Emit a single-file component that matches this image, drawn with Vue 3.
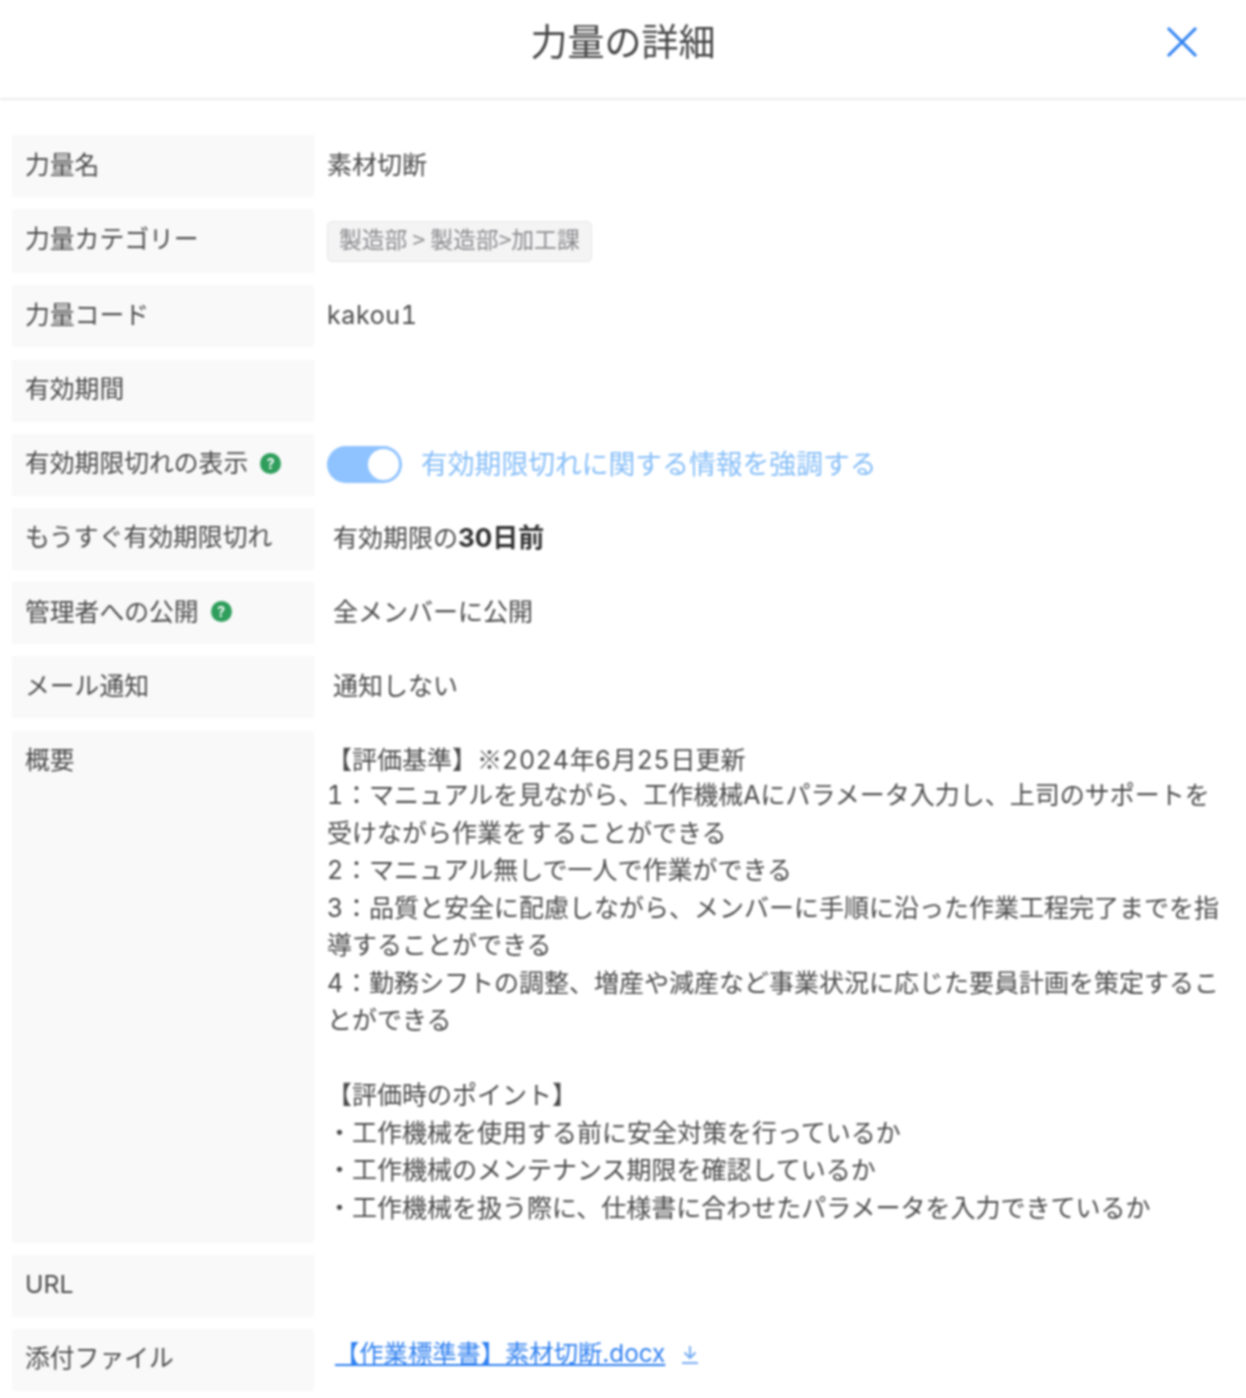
<script setup>
const lines = [
  '【評価基準】※2024年6月25日更新',
  '1：マニュアルを見ながら、工作機械Aにパラメータ入力し、上司のサポートを',
  '受けながら作業をすることができる',
  '2：マニュアル無しで一人で作業ができる',
  '3：品質と安全に配慮しながら、メンバーに手順に沿った作業工程完了までを指',
  '導することができる',
  '4：勤務シフトの調整、増産や減産など事業状況に応じた要員計画を策定するこ',
  'とができる',
  '',
  '【評価時のポイント】',
  '・工作機械を使用する前に安全対策を行っているか',
  '・工作機械のメンテナンス期限を確認しているか',
  '・工作機械を扱う際に、仕様書に合わせたパラメータを入力できているか'
]

// Digits are set wider than the surrounding text; the reference mark stays full width.
const rows = lines.map((line) =>
  line.split(/([0-9]+|※)/).filter(Boolean).map((text) => ({
    text,
    kind: /^[0-9]+$/.test(text) ? 'num' : text === '※' ? 'mark' : ''
  }))
)
</script>

<template>
  <div class="page">
    <header class="head">
      <h1 class="title">力量の詳細</h1>
      <button class="close" aria-label="閉じる">
        <svg viewBox="0 0 32 32" width="32" height="32"><path d="M2 2 L30 30 M30 2 L2 30" /></svg>
      </button>
    </header>
    <div class="table">
      <div class="label">力量名</div>
      <div class="value">素材切断</div>

      <div class="label tall">力量カテゴリー</div>
      <div class="value"><span class="tag">製造部 &gt; 製造部&gt;加工課</span></div>

      <div class="label">力量コード</div>
      <div class="value code">kakou1</div>

      <div class="label">有効期間</div>
      <div class="value"></div>

      <div class="label">
        <span>有効期限切れの表示</span>
        <span class="help">?</span>
      </div>
      <div class="value switch-row">
        <span class="switch"><span class="knob"></span></span>
        <span class="switch-text">有効期限切れに関する情報を強調する</span>
      </div>

      <div class="label">もうすぐ有効期限切れ</div>
      <div class="value inset">有効期限の<b class="strong">30日前</b></div>

      <div class="label">
        <span>管理者への公開</span>
        <span class="help">?</span>
      </div>
      <div class="value inset">全メンバーに公開</div>

      <div class="label">メール通知</div>
      <div class="value inset">通知しない</div>

      <div class="label">概要</div>
      <div class="value summary">
        <div v-for="(row, r) in rows" :key="r" class="line"><span v-for="(seg, i) in row" :key="i" :class="seg.kind">{{ seg.text }}</span></div>
      </div>

      <div class="label">URL</div>
      <div class="value"></div>

      <div class="label">添付ファイル</div>
      <div class="value inset file">
        <a class="link" href="#">【作業標準書】素材切断.docx</a>
        <svg class="dl" viewBox="0 0 18 20" width="18" height="20"><path d="M9 1 V12 M3.5 7.5 L9 13 L14.5 7.5 M1 18 H17" /></svg>
      </div>
    </div>
  </div>
</template>

<style>
html, body { margin: 0; background: #fff; }
</style>

<style scoped>
.page {
  width: 1246px;
  height: 1398px;
  overflow: hidden;
  background: #fff;
  color: #4a4a4a;
  font-family: Inter, "Noto Sans CJK JP", "Noto Sans", sans-serif;
  font-size: 25px;
  line-height: 37.5px;
  filter: blur(0.8px);
}
.head {
  height: 98px;
  border-bottom: 2px solid #ececec;
  display: flex;
  align-items: center;
  justify-content: center;
  position: relative;
  box-sizing: content-box;
  margin-bottom: 35px;
}
.title {
  margin: 0 0 12px;
  font-size: 37px;
  line-height: 56px;
  font-weight: 400;
  color: #444;
}
.close {
  position: absolute;
  right: 48px;
  top: 26px;
  width: 32px;
  height: 32px;
  padding: 0;
  border: 0;
  background: none;
}
.close svg { display: block; fill: none; stroke: #2f80f0; stroke-width: 3; }
.table {
  display: grid;
  grid-template-columns: 302px 1fr;
  grid-auto-rows: minmax(62px, auto);
  row-gap: 12.2px;
  margin-left: 12px;
}
.label {
  background: #f9f9f9;
  padding: 11.5px 13px 0;
  display: flex;
  align-items: flex-start;
  gap: 12px;
  white-space: nowrap;
  font-size: 24.8px;
}
.label.tall { height: 64px; box-sizing: border-box; }
.help {
  width: 21px;
  height: 21px;
  margin-top: 7.5px;
  border-radius: 50%;
  background: #2f9e5c;
  color: #fff;
  font-size: 14px;
  line-height: 21px;
  font-weight: 700;
  text-align: center;
}
.value {
  padding: 11.5px 13px 0;
  min-width: 0;
}
.inset { padding-left: 19px; }
.tag {
  display: inline-flex;
  align-items: center;
  height: 41px;
  box-sizing: border-box;
  padding: 0 11px 3px;
  background: #f4f4f5;
  border: 1px solid #e6e6e8;
  border-radius: 5px;
  color: #8a8a8d;
  font-family: "Noto Sans CJK JP", sans-serif;
  font-size: 22.8px;
  line-height: 1;
  white-space: nowrap;
}
.code { letter-spacing: 0.6px; font-variant-numeric: tabular-nums; }
.switch-row { display: flex; align-items: center; gap: 19px; padding-top: 0; height: 62px; }
.switch {
  width: 75px;
  height: 37px;
  border-radius: 19px;
  background: #8fc3ff;
  position: relative;
  flex: none;
}
.knob {
  position: absolute;
  right: 3px;
  top: 3px;
  width: 31px;
  height: 31px;
  border-radius: 50%;
  background: #fff;
}
.switch-text { color: #86bef8; font-size: 26.8px; white-space: nowrap; margin-bottom: 1px; }
.strong { font-weight: 700; font-size: 26px; color: #333; }
.summary {
  padding-top: 9px;
  height: 512px;
  box-sizing: border-box;
}
.line { height: 37.5px; white-space: pre; }
.num { font-variant-numeric: tabular-nums; letter-spacing: 0.7px; }
.mark { font-family: "Noto Sans CJK JP", sans-serif; }
.file { display: flex; align-items: flex-start; gap: 16px; padding-top: 6px; padding-left: 21px; }
.link { color: #2f80f0; text-decoration: underline; white-space: nowrap; font-size: 24.3px; }
.dl { margin-top: 10px; fill: none; stroke: #79aef2; stroke-width: 2; }
</style>
